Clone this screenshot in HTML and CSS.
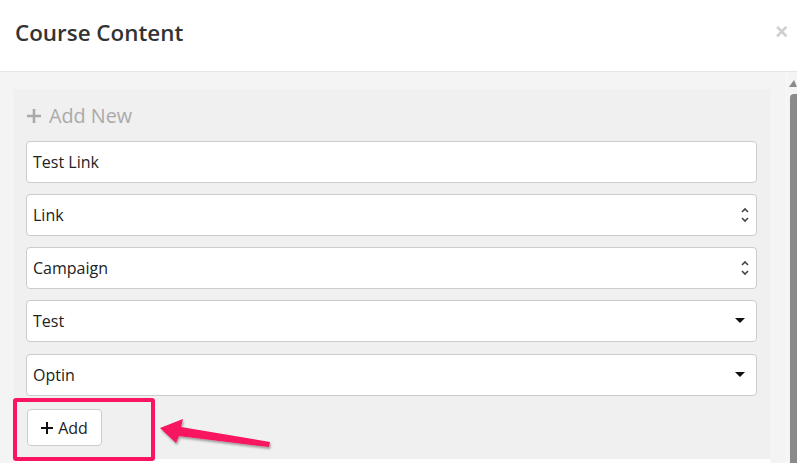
FILE: index.html
```html
<!DOCTYPE html>
<html>
<head>
<meta charset="utf-8">
<link rel="stylesheet" href="styles.css">
</head>
<body>
<div class="modal">
  <div class="modal-header">
    <h4 class="modal-title">Course Content</h4>
    <span class="close">&times;</span>
  </div>
  <div class="modal-main">
    <div class="modal-body">
      <div class="panel">
        <div class="add-new">
          <svg class="add-new-plus" width="16" height="16" viewBox="0 0 16 16"><path d="M8 1v14M1 8h14" stroke="#a9a9a9" stroke-width="2.6" fill="none"/></svg>
          <span>Add New</span>
        </div>
        <div class="field">Test Link</div>
        <div class="field field-spin">Link
          <svg class="spin" width="10" height="18" viewBox="0 0 10 18"><path d="M2 6l3-3 3 3M2 12l3 3 3-3" stroke="#444" stroke-width="1.6" fill="none"/></svg>
        </div>
        <div class="field field-spin">Campaign
          <svg class="spin" width="10" height="18" viewBox="0 0 10 18"><path d="M2 6l3-3 3 3M2 12l3 3 3-3" stroke="#444" stroke-width="1.6" fill="none"/></svg>
        </div>
        <div class="field field-select">Test
          <svg class="caret" width="10" height="6" viewBox="0 0 10 6"><path d="M0 0h10L5 5z" fill="#111"/></svg>
        </div>
        <div class="field field-select field-last">Optin
          <svg class="caret" width="10" height="6" viewBox="0 0 10 6"><path d="M0 0h10L5 5z" fill="#111"/></svg>
        </div>
        <div class="add-row">
          <button class="btn-add">
            <svg width="12" height="12" viewBox="0 0 12 12"><path d="M6 0v12M0 6h12" stroke="#111" stroke-width="2" fill="none"/></svg>
            <span>Add</span>
          </button>
          <div class="highlight"></div>
          <svg class="arrow" width="130" height="44" viewBox="0 0 130 44">
            <defs>
              <filter id="sh" x="-10%" y="-30%" width="130%" height="170%">
                <feDropShadow dx="1" dy="2" stdDeviation="1.2" flood-color="#000" flood-opacity="0.35"/>
              </filter>
            </defs>
            <polygon filter="url(#sh)" fill="#f7145f" points="5,19 28,10 26,18 115,33 114,38 24,27 21,34"/>
          </svg>
        </div>
      </div>
      <div class="footer-strip"></div>
    </div>
    <div class="scrollbar">
      <svg class="sb-arrow" width="11" height="9" viewBox="0 0 11 9"><path d="M3 9L8 2l3 7z" fill="#8a8a8a"/></svg>
      <div class="sb-thumb"></div>
    </div>
  </div>
</div>
</body>
</html>
```
FILE: styles.css
```css
html, body {
  margin: 0;
  padding: 0;
  background: #fff;
  font-family: "Open Sans", "Noto Sans", sans-serif;
  overflow: hidden;
}
.modal {
  width: 797px;
  height: 463px;
  display: flex;
  flex-direction: column;
}
.modal-header {
  height: 71px;
  border-bottom: 1px solid #e5e5e5;
  display: flex;
  align-items: center;
  justify-content: space-between;
  padding: 0 9px 0 15px;
  flex-shrink: 0;
}
.modal-title {
  margin: 0;
  font-size: 22.4px;
  font-weight: 600;
  color: #333;
  padding-bottom: 6px;
}
.close {
  font-family: "Liberation Sans", sans-serif;
  font-size: 22px;
  font-weight: 700;
  color: #cfcfcf;
  line-height: 1;
  margin-top: -8px;
}
.modal-main {
  flex: 1;
  display: flex;
  min-height: 0;
}
.modal-body {
  flex: 1;
  background: #f4f4f4;
  padding: 17px 16px 0 14px;
}
.panel {
  background: #f0f0f0;
  padding: 12px 13px 13px 12px;
}
.add-new {
  height: 28px;
  display: flex;
  align-items: center;
  gap: 7px;
  color: #aaa;
  font-size: 19.8px;
  margin-bottom: 12px;
}
.add-new-plus {
  margin-top: 1px;
}
.field {
  height: 40px;
  border: 1px solid #ccc;
  border-radius: 4px;
  background: #fff;
  display: flex;
  align-items: center;
  padding: 0 6px 0 6px;
  font-size: 16px;
  color: #222;
  margin-bottom: 11px;
  justify-content: space-between;
}
.field-last {
  margin-top: 12px;
  margin-bottom: 0;
}
.field-select .caret {
  margin-right: 5px;
}
.add-row {
  position: relative;
  margin-top: 13px;
  padding-left: 1px;
  height: 37px;
}
.btn-add {
  width: 75px;
  height: 37px;
  background: #fff;
  border: 1px solid #ccc;
  border-radius: 4px;
  display: flex;
  align-items: center;
  justify-content: center;
  gap: 5px;
  font-family: "Open Sans", "Noto Sans", sans-serif;
  font-size: 16px;
  color: #222;
  padding: 0;
}
.highlight {
  position: absolute;
  left: -13px;
  top: -11px;
  width: 134px;
  height: 55px;
  border: 4px solid #fb1463;
  border-radius: 3px;
}
.arrow {
  position: absolute;
  left: 129px;
  top: 0;
}
.footer-strip {
  height: 10px;
  background: #fff;
}
.scrollbar {
  width: 11px;
  background: #f4f4f4;
  border-left: 1px solid #f9f9f9;
  box-sizing: border-box;
  padding-top: 6px;
  display: flex;
  flex-direction: column;
  align-items: flex-end;
}
.sb-arrow {
  display: block;
}
.sb-thumb {
  margin-top: 7px;
  width: 7px;
  flex: 1;
  background: #8a8a8a;
  border-radius: 4px 0 0 0;
}
```
